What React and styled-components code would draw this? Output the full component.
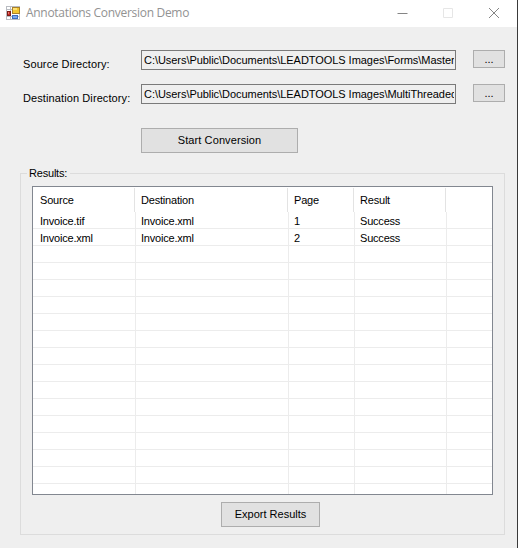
import React from "react";
import styled, { createGlobalStyle } from "styled-components";

const GlobalStyle = createGlobalStyle`
  * { box-sizing: border-box; }
  body { margin: 0; overflow: hidden; }
`;

const Window = styled.main`
  width: 518px;
  height: 548px;
  display: flex;
  flex-direction: column;
  background: #efefef;
  border-right: 1px solid #3a3a3a;
  font: 11px/14px "Liberation Sans", Arial, sans-serif;
  color: #000;
`;

const TitleBar = styled.header`
  height: 27px;
  flex: none;
  display: flex;
  align-items: center;
  padding: 0 0 1px 6px;
  background: #fff;
`;

const Title = styled.h1`
  flex: 1;
  margin: 0 0 0 6px;
  font: 400 12px/16px "Open Sans", "Segoe UI", sans-serif;
  letter-spacing: -0.3px;
  white-space: nowrap;
  color: #929292;
`;

const Controls = styled.div`
  display: flex;
  gap: 34px;
  margin-right: 17px;
`;

const Glyph = styled.svg`
  display: block;
  flex: none;
`;

const Form = styled.section`
  flex: none;
  display: grid;
  grid-template-columns: 118px 315px 32px;
  grid-template-rows: 20px 20px 35px;
  row-gap: 14px;
  padding: 23px 0 0 23px;
`;

const Label = styled.label`
  padding-top: 7px;
  white-space: nowrap;
  letter-spacing: 0.1px;
`;

const PathBox = styled.div`
  height: 20px;
  padding: 2px 0 0 2px;
  border: 1px solid #7a7a7a;
`;

const PathText = styled.span`
  display: block;
  width: 310px;
  overflow: hidden;
  white-space: nowrap;
  letter-spacing: ${(p) => p.$spacing};
`;

const Button = styled.button`
  width: 99px;
  height: 25px;
  padding: 0 0 2px;
  border: 1px solid #adadad;
  background: #e1e1e1;
  font: inherit;
  color: #000;
`;

const BrowseButton = styled(Button)`
  width: 32px;
  height: 18px;
  margin-left: 17px;
  padding: 0;
`;

const StartButton = styled(Button)`
  grid-column: 2;
  width: 157px;
  margin-top: 10px;
  letter-spacing: 0.1px;
`;

const Group = styled.fieldset`
  width: 485px;
  height: 369px;
  margin: 13px 0 0 20px;
  padding: 0 0 0 11px;
  min-width: 0;
  border: 1px solid #dcdcdc;
`;

const Legend = styled.legend`
  height: 14px;
  margin-left: -5px;
  padding: 0 3px 0 2px;
  letter-spacing: -0.2px;
`;

const ListView = styled.div`
  width: 461px;
  height: 309px;
  margin-top: 6px;
  border: 1px solid #828790;
  background: #fff;
  overflow: hidden;
`;

const HeaderRow = styled.div`
  display: grid;
  grid-template-columns: 102px 153px 66px 92px 1fr;
  height: 25px;
  padding-top: 1px;
`;

const HeaderCell = styled.div`
  padding: 5px 0 0 6px;
  border-right: 1px solid #e3e3e3;
  letter-spacing: -0.2px;
  &:first-child { padding-left: 7px; }
  &:last-child { border-right: 0; }
`;

const Row = styled.div`
  display: grid;
  grid-template-columns: 103px 153px 66px 92px 1fr;
  height: 17px;
  border-bottom: 1px solid #ececec;
`;

const Cell = styled.div`
  height: 17px;
  padding: 2px 0 0 5px;
  border-right: 1px solid #ececec;
  letter-spacing: -0.2px;
  &:first-child { padding-left: 7px; }
  &:last-child { border-right: 0; }
`;

const ExportButton = styled(Button)`
  display: block;
  margin: 7px 0 0 189px;
`;

const columns = ["Source", "Destination", "Page", "Result", ""];
const results = [
  ["Invoice.tif", "Invoice.xml", "1", "Success", ""],
  ["Invoice.xml", "Invoice.xml", "2", "Success", ""],
];
const rows = [...results, ...Array.from({ length: 15 }, () => ["", "", "", "", ""])];

function AppIcon() {
  return (
    <Glyph width="14" height="14" viewBox="0 0 14 14" shapeRendering="crispEdges">
      <path d="M0.5 .5h13v13H.5zM4.5 .5v13M.5 3.5h5M.5 10.5h13" fill="#fff" stroke="#b9bcc2" />
      <rect x="6" y="1" width="8" height="7" fill="#a9802a" />
      <rect x="7" y="2" width="6" height="5" fill="#f2c62f" />
      <rect x="7" y="2" width="4" height="2" fill="#ffe173" />
      <rect x="1" y="5" width="4" height="5" fill="#7c1d18" />
      <rect x="2" y="6" width="2" height="3" fill="#c52a26" />
      <rect x="2" y="6" width="1" height="2" fill="#e8786c" />
      <rect x="6" y="9" width="6" height="4" fill="#3a6dc0" />
      <rect x="7" y="10" width="4" height="2" fill="#7ba7ec" />
    </Glyph>
  );
}

export default function App() {
  return (
    <>
      <GlobalStyle />
      <Window>
        <TitleBar>
          <AppIcon />
          <Title>Annotations Conversion Demo</Title>
          <Controls>
            <Glyph width="12" height="12" viewBox="0 0 12 12"><path d="M1.5 6.5h10" stroke="#858585" /></Glyph>
            <Glyph width="12" height="12" viewBox="0 0 12 12"><path d="M1.5 1.5h9v9h-9z" fill="none" stroke="#e6e6e6" /></Glyph>
            <Glyph width="12" height="12" viewBox="0 0 12 12"><path d="M1 1l10 10M11 1L1 11" stroke="#858585" /></Glyph>
          </Controls>
        </TitleBar>
        <Form>
          <Label>Source Directory:</Label>
          <PathBox><PathText $spacing="-0.05px">C:\Users\Public\Documents\LEADTOOLS Images\Forms\Master</PathText></PathBox>
          <BrowseButton>...</BrowseButton>
          <Label>Destination Directory:</Label>
          <PathBox><PathText $spacing="-0.05px">C:\Users\Public\Documents\LEADTOOLS Images\MultiThreaded</PathText></PathBox>
          <BrowseButton>...</BrowseButton>
          <StartButton>Start Conversion</StartButton>
        </Form>
        <Group>
          <Legend>Results:</Legend>
          <ListView>
            <HeaderRow>
              {columns.map((name, i) => <HeaderCell key={i}>{name}</HeaderCell>)}
            </HeaderRow>
            {rows.map((row, i) => (
              <Row key={i}>
                {row.map((value, j) => <Cell key={j}>{value}</Cell>)}
              </Row>
            ))}
          </ListView>
          <ExportButton>Export Results</ExportButton>
        </Group>
      </Window>
    </>
  );
}
